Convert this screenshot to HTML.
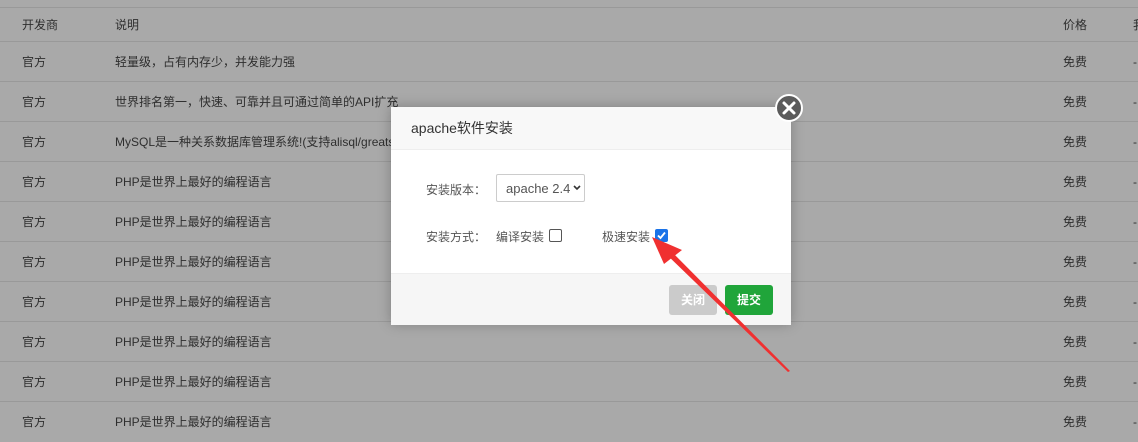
<!DOCTYPE html><html><head><meta charset="utf-8"><style>
body{margin:0;width:1138px;height:440px;overflow:hidden;background:#a9a9a9;font-family:"Liberation Sans","Noto Sans CJK SC",sans-serif;font-size:12px;color:#2e2e2e;position:relative}
.row{position:absolute;left:0;width:1138px;height:40px;border-top:1px solid #999;}
.row span{position:absolute;top:0;line-height:40px}
.m{position:absolute;left:391px;top:107px;width:400px;height:217px;background:#fff;box-shadow:0 0 12px rgba(0,0,0,.25)}
</style></head><body>
<div class="row" style="top:7px;height:34px"><span style="left:22px;line-height:34px">开发商</span><span style="left:115px;line-height:34px">说明</span><span style="left:1063px;line-height:34px">价格</span><span style="left:1133px;line-height:34px">我</span></div>
<div class="row" style="top:41px"><span style="left:22px">官方</span><span style="left:115px">轻量级，占有内存少，并发能力强</span><span style="left:1063px">免费</span><span style="left:1133px">-</span></div>
<div class="row" style="top:81px"><span style="left:22px">官方</span><span style="left:115px">世界排名第一，快速、可靠并且可通过简单的API扩充</span><span style="left:1063px">免费</span><span style="left:1133px">-</span></div>
<div class="row" style="top:121px"><span style="left:22px">官方</span><span style="left:115px">MySQL是一种关系数据库管理系统!(支持alisql/greatsql)</span><span style="left:1063px">免费</span><span style="left:1133px">-</span></div>
<div class="row" style="top:161px"><span style="left:22px">官方</span><span style="left:115px">PHP是世界上最好的编程语言</span><span style="left:1063px">免费</span><span style="left:1133px">-</span></div>
<div class="row" style="top:201px"><span style="left:22px">官方</span><span style="left:115px">PHP是世界上最好的编程语言</span><span style="left:1063px">免费</span><span style="left:1133px">-</span></div>
<div class="row" style="top:241px"><span style="left:22px">官方</span><span style="left:115px">PHP是世界上最好的编程语言</span><span style="left:1063px">免费</span><span style="left:1133px">-</span></div>
<div class="row" style="top:281px"><span style="left:22px">官方</span><span style="left:115px">PHP是世界上最好的编程语言</span><span style="left:1063px">免费</span><span style="left:1133px">-</span></div>
<div class="row" style="top:321px"><span style="left:22px">官方</span><span style="left:115px">PHP是世界上最好的编程语言</span><span style="left:1063px">免费</span><span style="left:1133px">-</span></div>
<div class="row" style="top:361px"><span style="left:22px">官方</span><span style="left:115px">PHP是世界上最好的编程语言</span><span style="left:1063px">免费</span><span style="left:1133px">-</span></div>
<div class="row" style="top:401px"><span style="left:22px">官方</span><span style="left:115px">PHP是世界上最好的编程语言</span><span style="left:1063px">免费</span><span style="left:1133px">-</span></div>
<div class="m">
<div style="height:42px;background:#f8f8f8;border-bottom:1px solid #eee;line-height:42px;padding-left:20px;font-size:14px;color:#333">apache软件安装</div>
<div style="position:absolute;left:35px;top:74px;color:#555">安装版本：</div>
<div style="position:absolute;left:105px;top:67px;width:89px;height:28px;border:1px solid #ccc;border-radius:2px;line-height:28px;padding-left:9px;box-sizing:border-box;font-size:13px;color:#555">apache 2.4</div>
<svg style="position:absolute;left:182px;top:78px" width="8" height="6"><path d="M1 1 L4 4 L7 1" stroke="#333" stroke-width="1.6" fill="none"/></svg>
<div style="position:absolute;left:35px;top:121px;color:#555">安装方式：</div>
<div style="position:absolute;left:105px;top:121px;color:#555">编译安装</div>
<div style="position:absolute;left:158px;top:122px;width:11px;height:11px;border:1px solid #555;border-radius:2px"></div>
<div style="position:absolute;left:211px;top:121px;color:#555">极速安装</div>
<div style="position:absolute;left:264px;top:122px;width:13px;height:13px;background:#1a73e8;border-radius:2px"></div>
<svg style="position:absolute;left:264px;top:122px" width="13" height="13"><path d="M3 6.5 L5.5 9 L10 3.5" stroke="#fff" stroke-width="1.8" fill="none"/></svg>
<div style="position:absolute;left:0;top:166px;width:400px;height:51px;background:#f6f6f6;border-top:1px solid #eee"></div>
<div style="position:absolute;left:278px;top:178px;width:48px;height:30px;background:#cbcbcb;border-radius:3px;color:#fff;line-height:30px;text-align:center;font-weight:bold">关闭</div>
<div style="position:absolute;left:334px;top:178px;width:48px;height:30px;background:#20a53a;border-radius:3px;color:#fff;line-height:30px;text-align:center;font-weight:bold">提交</div>
</div>
<div style="position:absolute;left:775px;top:94px;width:24px;height:24px;border:2px solid #fff;border-radius:50%;background:#5b5b5b"></div>
<svg style="position:absolute;left:775px;top:94px" width="28" height="28"><path d="M9 9 L19 19 M19 9 L9 19" stroke="#fff" stroke-width="3" stroke-linecap="round"/></svg>
<svg style="position:absolute;left:0;top:0" width="1138" height="440"><polygon points="790,371 788,372 664,252 668,248" fill="#f03030"/><polygon points="652,237 682,250 664,264" fill="#f03030"/></svg>
</body></html>
